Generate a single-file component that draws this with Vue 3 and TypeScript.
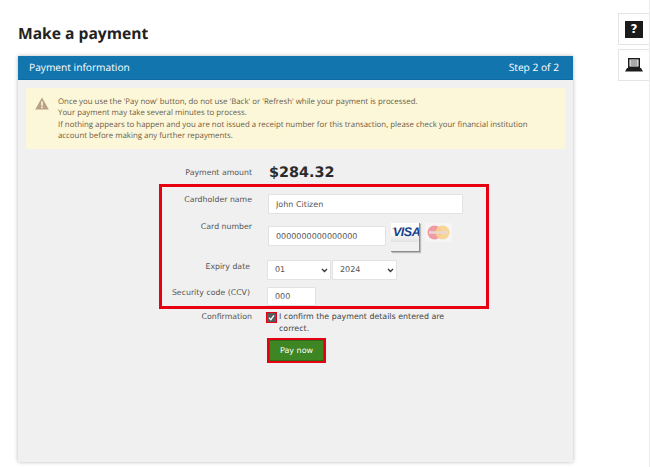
<script setup lang="ts">
const months: string[] = ['01']
const years: string[] = ['2024']
</script>

<template>
  <div class="page">
    <main class="main">
      <h1 class="title">Make a payment</h1>
      <section class="card">
        <header class="card-head">
          <span>Payment information</span>
          <span>Step 2 of 2</span>
        </header>
        <div class="card-body">
          <div class="notice">
            <svg class="warn" width="14" height="13" viewBox="0 0 14 13">
              <path d="M7 .5 13.8 12.6H.2z" fill="#b8a184" />
              <rect x="6.2" y="4.400" width="1.6" height="4.4" fill="#fdf7d9" />
              <rect x="6.2" y="9.600" width="1.6" height="1.6" fill="#fdf7d9" />
            </svg>
            <p>
              Once you use the 'Pay now' button, do not use 'Back' or 'Refresh' while your payment is processed.<br />
              Your payment may take several minutes to process.<br />
              If nothing appears to happen and you are not issued a receipt number for this transaction, please check your financial institution<br />
              account before making any further repayments.
            </p>
          </div>

          <div class="form">
            <div class="row amount-row">
              <span class="label">Payment amount</span>
              <strong class="amount">$284.32</strong>
            </div>

            <div class="highlight">
              <div class="row name-row">
                <label class="label">Cardholder name</label>
                <input class="input name" value="John Citizen" />
              </div>
              <div class="row number-row">
                <label class="label">Card number</label>
                <input class="input number" value="0000000000000000" />
                <div class="visa-wrap">
                  <div class="visa"><i></i><span>VISA</span></div>
                </div>
                <div class="mc">
                  <svg width="27" height="19" viewBox="0 0 27 19">
                    <circle cx="9.5" cy="9.500" r="7" fill="#f09aa1" />
                    <circle cx="17.5" cy="9.500" r="7" fill="#f8d08e" fill-opacity=".92" />
                    <rect x="4" y="8.200" width="19" height="2.6" fill="#e9d6cf" />
                  </svg>
                </div>
              </div>
              <div class="row expiry-row">
                <label class="label">Expiry date</label>
                <div class="selects">
                  <select class="select month"><option v-for="m in months" :key="m">{{ m }}</option></select>
                  <select class="select year"><option v-for="y in years" :key="y">{{ y }}</option></select>
                </div>
              </div>
              <div class="row ccv-row">
                <label class="label">Security code (CCV)</label>
                <input class="input ccv" value="000" />
              </div>
            </div>

            <div class="row confirm-row">
              <span class="label">Confirmation</span>
              <div class="confirm">
                <span class="check">
                  <svg width="9" height="9" viewBox="0 0 9 9"><rect width="9" height="9" fill="#555b61" /><path d="M2 4.600 3.800 6.600 7 2.400" fill="none" stroke="#fff" stroke-width="1.4" /></svg>
                </span>
                <span class="confirm-text">I confirm the payment details entered are correct.</span>
              </div>
            </div>

            <button class="pay" type="button">Pay now</button>
          </div>
        </div>
      </section>
    </main>

    <aside class="side">
      <div class="tab">
        <span class="help">?</span>
      </div>
      <div class="tab">
        <svg width="18" height="14" viewBox="0 0 18 14">
          <path d="M3 0h12v10H3zM4.500 1.500v7h9v-7z" fill="#1c1c1c" fill-rule="evenodd" />
          <path d="M5.500 2.500h7v1h-7zM5.500 4.500h7v1h-7zM5.500 6.500h7v1h-7z" fill="#555" />
          <path d="M2 10h14l2 3.500H0z" fill="#1c1c1c" />
        </svg>
      </div>
    </aside>
  </div>
</template>

<style>
html, body { background: #fff; }
body { overflow: hidden; }
</style>

<style scoped>
.page {
  position: relative;
  display: flex;
  width: 650px;
  height: 467px;
  overflow: hidden;
  background: #fff;
  box-sizing: border-box;
  border-right: 1px solid #ececec;
  text-rendering: geometricPrecision;
}
.main { width: 555px; margin-left: 18px; flex: none; }
.title {
  margin: 23px 0 0;
  height: 33px;
  font: 700 15.6px/21px "Open Sans", sans-serif;
  color: #222;
}
.card {
  height: 406px;
  background: #f0f0f0;
  box-shadow: 0 0 4px rgba(0, 0, 0, .28);
}
.card-head {
  display: flex;
  justify-content: space-between;
  align-items: center;
  box-sizing: border-box;
  height: 24px;
  padding: 0 14px 0 11px;
  background: #1275ae;
  border-bottom: 1px solid #0f6ca3;
  color: #fff;
  font: 400 10.2px/1 "Open Sans", sans-serif;
}
.card-body { padding: 8px 8px 0; }
.notice {
  display: flex;
  box-sizing: border-box;
  height: 61px;
  background: #fdf7d9;
  padding: 8px 8px 0 9px;
}
.warn { flex: none; margin: 1px 9px 0 0; }
.notice p {
  margin: 1px 0 0;
  font: 400 7.85px/11.4px "Open Sans", sans-serif;
  color: #6d5b45;
  white-space: nowrap;
}
.form {
  display: flex;
  flex-direction: column;
  font: 400 7.8px/12px "DejaVu Sans", sans-serif;
  color: #444;
}
.row { display: flex; }
.label {
  flex: none;
  width: 226px;
  text-align: right;
  white-space: nowrap;
  font: 400 7.8px/12px "DejaVu Sans", sans-serif;
  color: #555;
}
.amount-row { height: 35px; align-items: flex-end; }
.amount-row .label { margin-bottom: 5px; }
.amount {
  margin-left: 17px;
  font: 700 14.4px/20px "DejaVu Sans", sans-serif;
  color: #2b2b2b;
  margin-bottom: 1px;
}
.highlight {
  box-sizing: border-box;
  width: 330px;
  height: 125px;
  margin-left: 133px;
  border: 3px solid #e60012;
  padding-top: 7px;
  display: flex;
  flex-direction: column;
}
.highlight .label { width: 90px; }
.input, .select {
  box-sizing: border-box;
  border: 1px solid #e2e2e2;
  background-color: #fff;
  font: 400 8px/12px "DejaVu Sans", sans-serif;
  color: #555;
  outline: none;
  border-radius: 1px;
  text-rendering: geometricPrecision;
}
.input { padding: 0 7px; height: 20px; }
.name-row { height: 32px; }
.name-row .input { margin-left: 16px; width: 195px; }
.number-row { height: 34px; }
.number-row .label { margin-top: -5px; }
.number-row .input { margin-left: 16px; width: 118px; }
.visa-wrap {
  margin: -3px 0 0 5px;
  box-sizing: border-box;
  width: 29px;
  height: 29px;
  border-right: 1px solid #8e8e8e;
  border-bottom: 1px solid #8e8e8e;
  box-shadow: 1px 1px 1px #bbb;
}
.visa {
  position: relative;
  height: 19px;
  background: linear-gradient(#fff 0, #fbfbfb 55%, #e2e2e2 100%);
  overflow: hidden;
}
.visa i {
  position: absolute;
  left: 1px;
  top: 5px;
  border-top: 3px solid #e9a82b;
  border-left: 4px solid transparent;
}
.visa span {
  position: absolute;
  left: 2px;
  top: 2px;
  font: italic 900 12.5px/15px "Liberation Sans", sans-serif;
  letter-spacing: -.5px;
  color: #14418c;
}
.mc {
  margin: -3px 0 0 5px;
  width: 27px;
  height: 19px;
  background: #f5f5f5;
  border-radius: 2px;
}
.mc svg { display: block; }
.expiry-row { height: 27px; }
.expiry-row .label { margin-top: 1px; width: 88px; }
.selects { display: flex; gap: 1px; margin-left: 17px; }
.select {
  height: 20px;
  padding: 0 0 0 7px;
  appearance: none;
  background-image: url("data:image/svg+xml,%3Csvg xmlns='http://www.w3.org/2000/svg' width='7' height='5'%3E%3Cpath d='M1 1l2.500 2.500L6 1' fill='none' stroke='%23333' stroke-width='1.300'/%3E%3C/svg%3E");
  background-repeat: no-repeat;
  background-position: right 2px center;
}
.month { width: 64px; }
.year { width: 65px; }
.ccv-row .label { width: 88px; }
.ccv-row .input { margin-left: 17px; width: 49px; height: 19px; }
.confirm-row { margin-top: 2px; }
.confirm { display: flex; margin-left: 15px; width: 190px; align-items: flex-start; }
.check {
  flex: none;
  box-sizing: border-box;
  width: 9px;
  height: 9px;
  margin: 2px 3px 0 0;
  outline: 1px solid #e60012;
  line-height: 0;
}
.confirm-text { font: 400 7.9px/11.5px "DejaVu Sans", sans-serif; color: #444; }
.pay {
  align-self: flex-start;
  margin: 4px 0 0 241px;
  box-sizing: border-box;
  width: 59px;
  height: 25px;
  background: #3e8523;
  border: 2px solid #e60012;
  box-shadow: inset 0 0 0 1px #2f6e18;
  color: #fff;
  font: 400 8px/1 "DejaVu Sans", sans-serif;
  padding: 0;
  text-rendering: geometricPrecision;
}
.side {
  position: absolute;
  right: -1px;
  top: 13px;
  display: flex;
  flex-direction: column;
  gap: 4px;
}
.tab {
  box-sizing: border-box;
  width: 32px;
  height: 32px;
  border: 1px solid #e4e4e4;
  display: flex;
  align-items: center;
  justify-content: center;
  background: #fff;
}
.help {
  display: block;
  width: 18px;
  height: 17px;
  background: #1b1b1b;
  color: #fff;
  text-align: center;
  font: 700 12px/17px "DejaVu Sans", sans-serif;
}
</style>
